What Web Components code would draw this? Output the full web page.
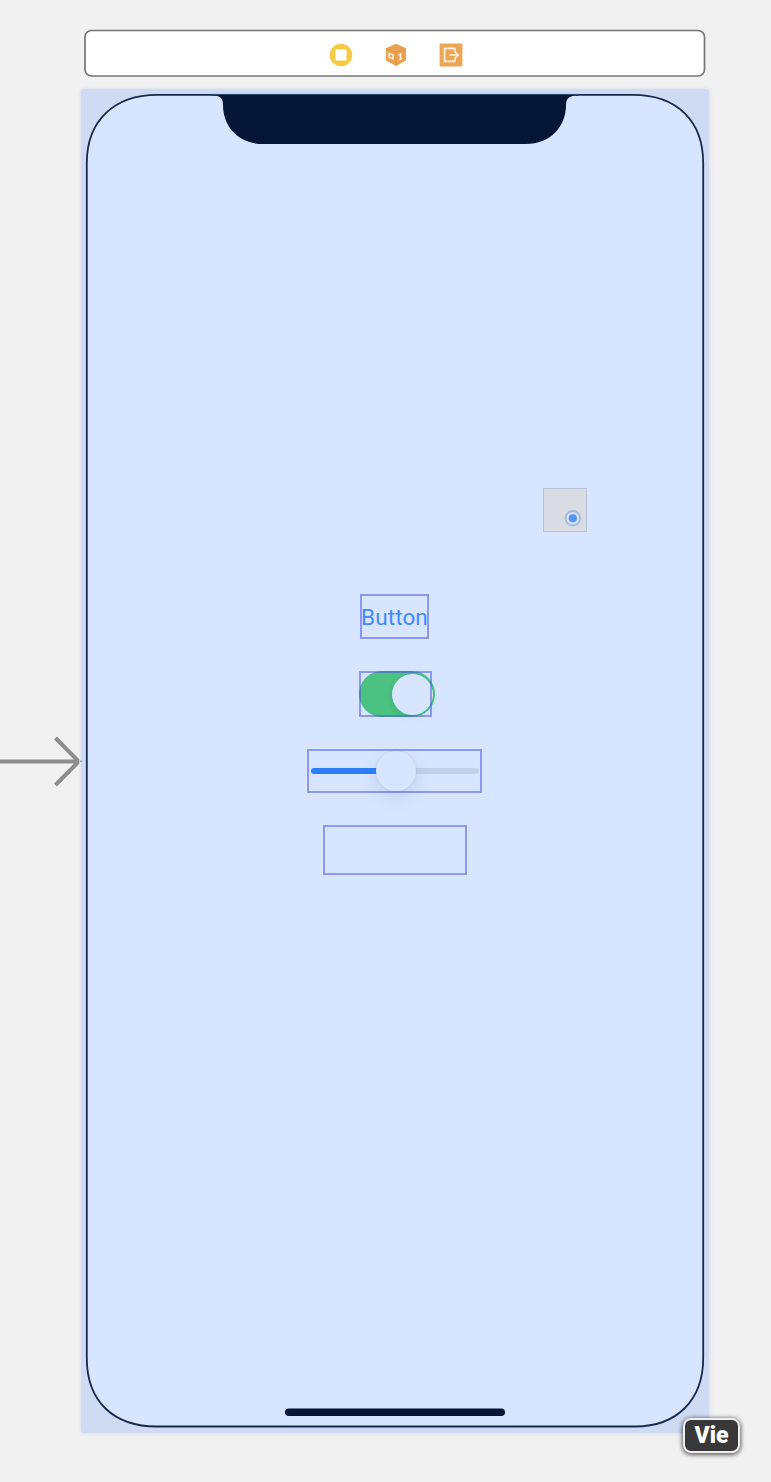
<!DOCTYPE html>
<html lang="en">
<head>
<meta charset="utf-8">
<title>Interface Builder</title>
<style>
html,body{margin:0;width:771px;height:1482px;background:#f1f1f1;overflow:hidden;font-family:Roboto,"Liberation Sans",sans-serif}
</style>
</head>
<body>
<ib-canvas>
  <scene-dock slot="dock"></scene-dock>
  <device-frame slot="device">
    <gesture-view></gesture-view>
    <selection-box style="--w:69px;--h:45px;margin:62px 0 0 279px"><ib-button>Button</ib-button></selection-box>
    <selection-box style="--w:73px;--h:46px;margin:32px 0 0 278px"><ib-switch></ib-switch></selection-box>
    <selection-box style="--w:175px;--h:44px;margin:32px 0 0 226px"><ib-slider></ib-slider></selection-box>
    <selection-box style="--w:144px;--h:50px;margin:32px 0 0 242px"></selection-box>
  </device-frame>
  <entry-arrow slot="overlay"></entry-arrow>
  <drag-tip slot="overlay">Vie</drag-tip>
</ib-canvas>
<script>
const define = (name, html) => {
  const t = document.createElement('template');
  t.innerHTML = html;
  customElements.define(name, class extends HTMLElement {
    constructor() {
      super();
      this.attachShadow({mode: 'open'}).append(t.content.cloneNode(true));
    }
  });
};

define('ib-canvas', `
<style>
:host{display:flex;flex-direction:column;position:relative;width:771px;height:1482px;box-sizing:border-box;padding:29px 0 0 81px}
</style>
<slot name="dock"></slot><slot name="device"></slot><slot name="overlay"></slot>`);

define('scene-dock', `
<style>
:host{display:flex;align-items:center;justify-content:center;gap:31px;position:relative;box-sizing:border-box;width:622px;height:48px;margin-left:3px;padding:3px 0 0 1px}
svg{display:block;position:relative;width:24px;height:24px}
.bg{position:absolute;left:0;top:0;width:622px;height:48px}
</style>
<svg class="bg" viewBox="0 0 622 48"><rect x="1" y="1.5" width="619.5" height="45.5" rx="6.5" fill="#fff" stroke="#767676" stroke-width="1.7"/></svg>
<svg viewBox="0 0 24 24"><circle cx="12" cy="12" r="11.3" fill="#f5ca45"/><rect x="6.5" y="6.5" width="11" height="11" rx=".8" fill="#fff"/></svg>
<svg viewBox="0 0 24 24"><path d="M12 .8 22 5.3V17.6L12 23 2 17.6V5.3Z" fill="#eba14f"/><path d="M2 5.3 12 9.3 22 5.3M12 9.3V23" fill="none" stroke="#e39442" stroke-width="1"/><path d="M5 10.4 9 11.8V15.8L5 14.4ZM14.4 12.2 16.5 10.8V16M14.8 16.6 18 15.3" fill="none" stroke="#fff0df" stroke-width="1.5"/></svg>
<svg viewBox="0 0 24 24"><rect x=".6" y=".6" width="22.8" height="22.8" rx=".8" fill="#eca554"/><path d="M15.7 8.7V5.3H5.6V18.3H15.7V15.2M10.7 12H19M16 9 19.2 12 16 15" fill="none" stroke="#fff2e2" stroke-width="1.7"/></svg>`);

define('device-frame', `
<style>
:host{display:flex;flex-direction:column;align-items:flex-start;position:relative;box-sizing:border-box;width:628px;height:1344px;margin-top:12px;padding-top:399px;background:#cedbf3;border-radius:3px;box-shadow:0 0 4px #cfdaec}
svg{position:absolute;left:0;top:0;display:block}
</style>
<svg width="628" height="1344" viewBox="81 89 628 1344">
<path d="M157 94.8H633C678 94.8 703.2 122 703.2 163V1358C703.2 1400 677 1426.5 635 1426.5H157C114 1426.5 86.8 1402 86.8 1358V163C86.8 121 114 94.8 157 94.8Z" fill="#d7e6fe" stroke="#152a4c" stroke-width="1.8"/>
<path d="M212 94.5H578V95.5C571 95.5 566 97 566 105C566 127 550 144 526 144H263C239 144 223 127 223 105C223 97 219 95.5 212 95.5Z" fill="#051637"/>
<path d="M212 94.4H578" stroke="#3a5276" stroke-width="1"/>
<rect x="285" y="1408.5" width="220" height="7.5" rx="3.75" fill="#051637"/>
</svg>
<slot></slot>`);

define('gesture-view', `
<style>
:host{display:block;position:relative;box-sizing:border-box;width:44px;height:44px;margin-left:462px;background:#d9dce3;border:1px solid #b7c2d7}
svg{display:block;margin:21px 0 0 20px}
</style>
<svg width="18" height="18" viewBox="0 0 18 18"><circle cx="8.8" cy="8.3" r="7.3" fill="#d9e0eb" stroke="#9ebbe5" stroke-width="1.8"/><circle cx="8.8" cy="8.3" r="4.1" fill="#5797f4"/></svg>`);

define('selection-box', `
<style>
:host{display:block;position:relative;width:var(--w);height:var(--h)}
i{position:absolute;inset:0;border:2px solid rgba(75,88,228,.55);box-sizing:border-box}
</style>
<slot></slot><i></i>`);

define('ib-button', `
<style>
:host{display:flex;align-items:center;justify-content:center;height:100%;color:#4389fb;font-size:22.5px;line-height:26px;letter-spacing:.1px;white-space:nowrap;padding-top:1px;box-sizing:border-box}
</style>
<slot></slot>`);

define('ib-switch', `
<style>
:host{display:flex;justify-content:flex-end;align-items:center;box-sizing:border-box;width:76px;height:46px;padding-right:2.5px;border-radius:23px;background:#4bc182}
b{width:41px;height:41px;border-radius:50%;background:#d7e6fe;box-shadow:0 2px 6px rgba(20,80,50,.12)}
</style>
<b></b>`);

define('ib-slider', `
<style>
:host{display:flex;align-items:center;height:100%;padding:0 3px 0 4px;box-sizing:border-box}
.on,.off{height:6px;background:#2f7ffd;border-radius:3px 0 0 3px;width:65.5px}
.off{flex:1;background:#c3d0ea;border-radius:0 3px 3px 0}
b{position:relative;top:-.5px;width:40px;height:40px;margin:0 -1px;border-radius:50%;background:#d7e6fe;box-shadow:0 0 1px 1px rgba(70,90,130,.07),0 6px 16px rgba(50,80,130,.15)}
</style>
<span class="on"></span><b></b><span class="off"></span>`);

define('entry-arrow', `
<style>
:host{display:block;position:absolute;left:0;top:734px}
svg{display:block}
</style>
<svg width="84" height="56" viewBox="0 734 84 56"><path d="M0 761.5H77M55.5 738 77.3 760V763L55.5 785" fill="none" stroke="#8d8d8d" stroke-width="4"/><circle cx="81" cy="761.3" r="1" fill="#8d99b0"/></svg>`);

define('drag-tip', `
<style>
:host{display:flex;align-items:center;justify-content:center;position:absolute;left:683px;top:1418px;width:57px;height:35px;box-sizing:border-box;border:2.5px solid #eee;border-radius:8px;background:#383838;box-shadow:0 1px 4px 1px rgba(0,0,0,.6);color:#fff;font-size:23px;line-height:26px;font-weight:900}
</style>
<slot></slot>`);
</script>
</body>
</html>
